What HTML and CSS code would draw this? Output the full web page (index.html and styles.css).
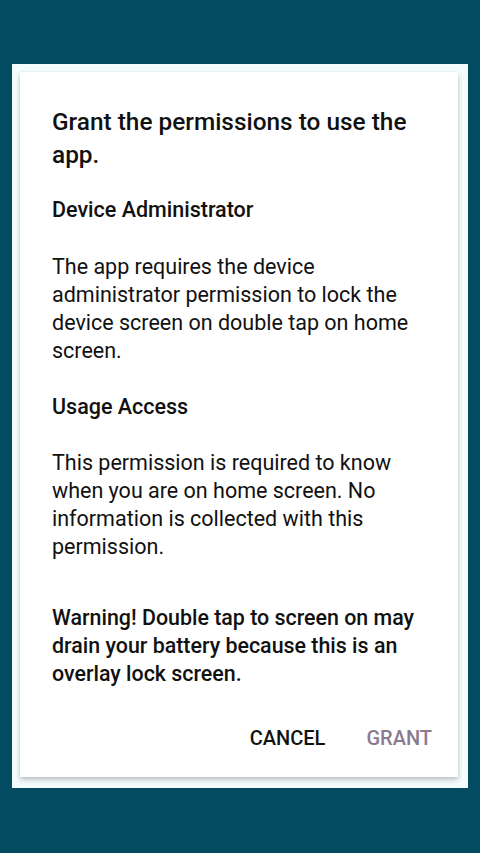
FILE: index.html
```html
<!DOCTYPE html>
<html>
<head>
<meta charset="utf-8">
<link rel="stylesheet" href="styles.css">
</head>
<body>
<div class="panel">
  <div class="card">
    <h1 class="title">Grant the permissions to use the app.</h1>
    <h2 class="heading first">Device Administrator</h2>
    <p class="body first">The app requires the device administrator permission to lock the device screen on double tap on home screen.</p>
    <h2 class="heading">Usage Access</h2>
    <p class="body">This permission is required to know when you are on home screen. No information is collected with this permission.</p>
    <p class="warning">Warning! Double tap to screen on may drain your battery because this is an overlay lock screen.</p>
    <div class="actions">
      <span class="btn cancel">CANCEL</span>
      <span class="btn grant">GRANT</span>
    </div>
  </div>
</div>
</body>
</html>
```
FILE: styles.css
```css
html, body {
  margin: 0;
  padding: 0;
}
body {
  width: 480px;
  height: 853px;
  background: #034b61;
  font-family: Roboto, "Noto Sans", sans-serif;
  color: #111;
  overflow: hidden;
}
.panel {
  margin: 64px 12px 0 12px;
  height: 724px;
  box-sizing: border-box;
  padding: 8px 10px 11px 8px;
  background: #f4fdfd;
}
.card {
  height: 100%;
  box-sizing: border-box;
  background: #fff;
  box-shadow: 0 3px 5px rgba(0,0,0,0.22), 0 0 2px rgba(0,0,0,0.08);
  padding: 33px 26px 0 32px;
  display: flex;
  flex-direction: column;
}
.title {
  margin: 0;
  font-size: 24.4px;
  font-weight: 500;
  line-height: 33px;
}
.heading {
  margin: 28px 0 0 0;
  font-size: 21.5px;
  font-weight: 500;
  line-height: 28px;
}
.heading.first {
  margin-top: 25px;
}
.body {
  margin: 28px 0 0 0;
  font-size: 21.5px;
  font-weight: 400;
  line-height: 28px;
}
.body.first {
  margin-top: 29px;
}
.warning {
  margin: 43px 0 0 0;
  font-size: 21.4px;
  font-weight: 500;
  line-height: 28px;
}
.actions {
  margin-top: 36px;
  display: flex;
  justify-content: flex-end;
  gap: 41px;
}
.btn {
  font-size: 20px;
  font-weight: 500;
  line-height: 28px;
}
.cancel { color: #111; }
.grant { color: #8b7a90; }
```
